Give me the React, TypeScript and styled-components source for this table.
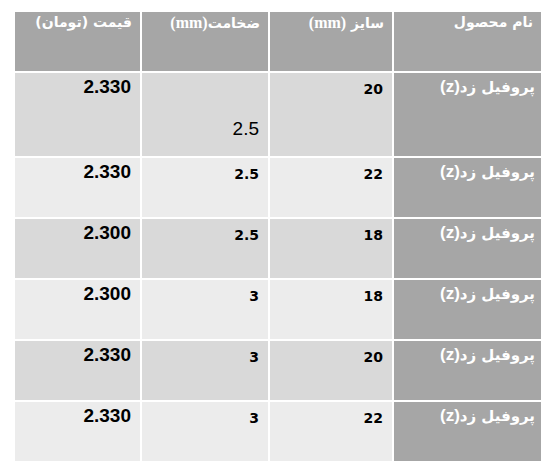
import React from "react";
import styled, { createGlobalStyle } from "styled-components";

const GlobalStyle = createGlobalStyle`
  html, body {
    margin: 0;
    padding: 0;
    background: #fff;
  }
`;

type Row = {
  name: string;
  size: string;
  thickness: string;
  price: string;
};

const rows: Row[] = [
  { name: "پروفیل زد", size: "20", thickness: "2.5", price: "2.330" },
  { name: "پروفیل زد", size: "22", thickness: "2.5", price: "2.330" },
  { name: "پروفیل زد", size: "18", thickness: "2.5", price: "2.300" },
  { name: "پروفیل زد", size: "18", thickness: "3", price: "2.300" },
  { name: "پروفیل زد", size: "20", thickness: "3", price: "2.330" },
  { name: "پروفیل زد", size: "22", thickness: "3", price: "2.330" },
];

export default function App() {
  return (
    <>
      <GlobalStyle />
      <Page>
        <PriceTable>
          <colgroup>
            <col style={{ width: 149 }} />
            <col style={{ width: 124 }} />
            <col style={{ width: 128 }} />
            <col style={{ width: 127 }} />
          </colgroup>
          <thead>
            <tr>
              <HeadCell>نام محصول</HeadCell>
              <HeadCell>
                سایز <Latin>(mm)</Latin>
              </HeadCell>
              <HeadCell>
                ضخامت<Latin>(mm)</Latin>
              </HeadCell>
              <HeadCell>قیمت (تومان)</HeadCell>
            </tr>
          </thead>
          <tbody>
            {rows.map((row, i) => (
              <BodyRow key={i} $tall={i === 0}>
                <NameCell>
                  {row.name}
                  <Zed>(z)</Zed>
                </NameCell>
                <DataCell $shade={i % 2 === 0}>
                  <SmallNum>{row.size}</SmallNum>
                </DataCell>
                <DataCell $shade={i % 2 === 0}>
                  {i === 0 ? (
                    <PlainNum>{row.thickness}</PlainNum>
                  ) : (
                    <SmallNum>{row.thickness}</SmallNum>
                  )}
                </DataCell>
                <DataCell $shade={i % 2 === 0}>
                  <Price>{row.price}</Price>
                </DataCell>
              </BodyRow>
            ))}
          </tbody>
        </PriceTable>
      </Page>
    </>
  );
}

const Page = styled.div`
  padding: 10px 0 0 13px;
`;

const PriceTable = styled.table`
  direction: rtl;
  border-collapse: collapse;
  table-layout: fixed;
  width: 528px;
`;

const HeadCell = styled.th`
  height: 57px;
  background: #a6a6a6;
  border: 2px solid #fff;
  color: #fff;
  font-family: "DejaVu Sans", sans-serif;
  font-weight: bold;
  font-size: 14px;
  text-align: right;
  vertical-align: top;
  padding: 2px 8px 0 8px;
`;

const Latin = styled.span`
  font-family: "Liberation Serif", serif;
  font-size: 16px;
`;

const BodyRow = styled.tr<{ $tall: boolean }>`
  height: ${(p) => (p.$tall ? "85px" : "61px")};
`;

const NameCell = styled.td`
  background: #a6a6a6;
  border: 2px solid #fff;
  color: #fff;
  font-family: "DejaVu Sans", sans-serif;
  font-weight: bold;
  font-size: 15px;
  text-align: right;
  vertical-align: top;
  padding: 4px 6px 0 6px;
`;

const Zed = styled.span`
  font-family: "Liberation Sans", sans-serif;
  font-size: 17px;
`;

const DataCell = styled.td<{ $shade: boolean }>`
  background: ${(p) => (p.$shade ? "#d9d9d9" : "#ececec")};
  border: 2px solid #fff;
  text-align: right;
  vertical-align: top;
  padding: 3px 9px 0 9px;
  color: #000;
`;

const SmallNum = styled.div`
  font-family: "DejaVu Sans", sans-serif;
  font-weight: bold;
  font-size: 14px;
  padding-top: 5px;
`;

const PlainNum = styled.div`
  font-family: "Liberation Sans", sans-serif;
  font-size: 19px;
  padding-top: 42px;
`;

const Price = styled.div`
  font-family: "Liberation Sans", sans-serif;
  font-weight: bold;
  font-size: 19px;
`;
